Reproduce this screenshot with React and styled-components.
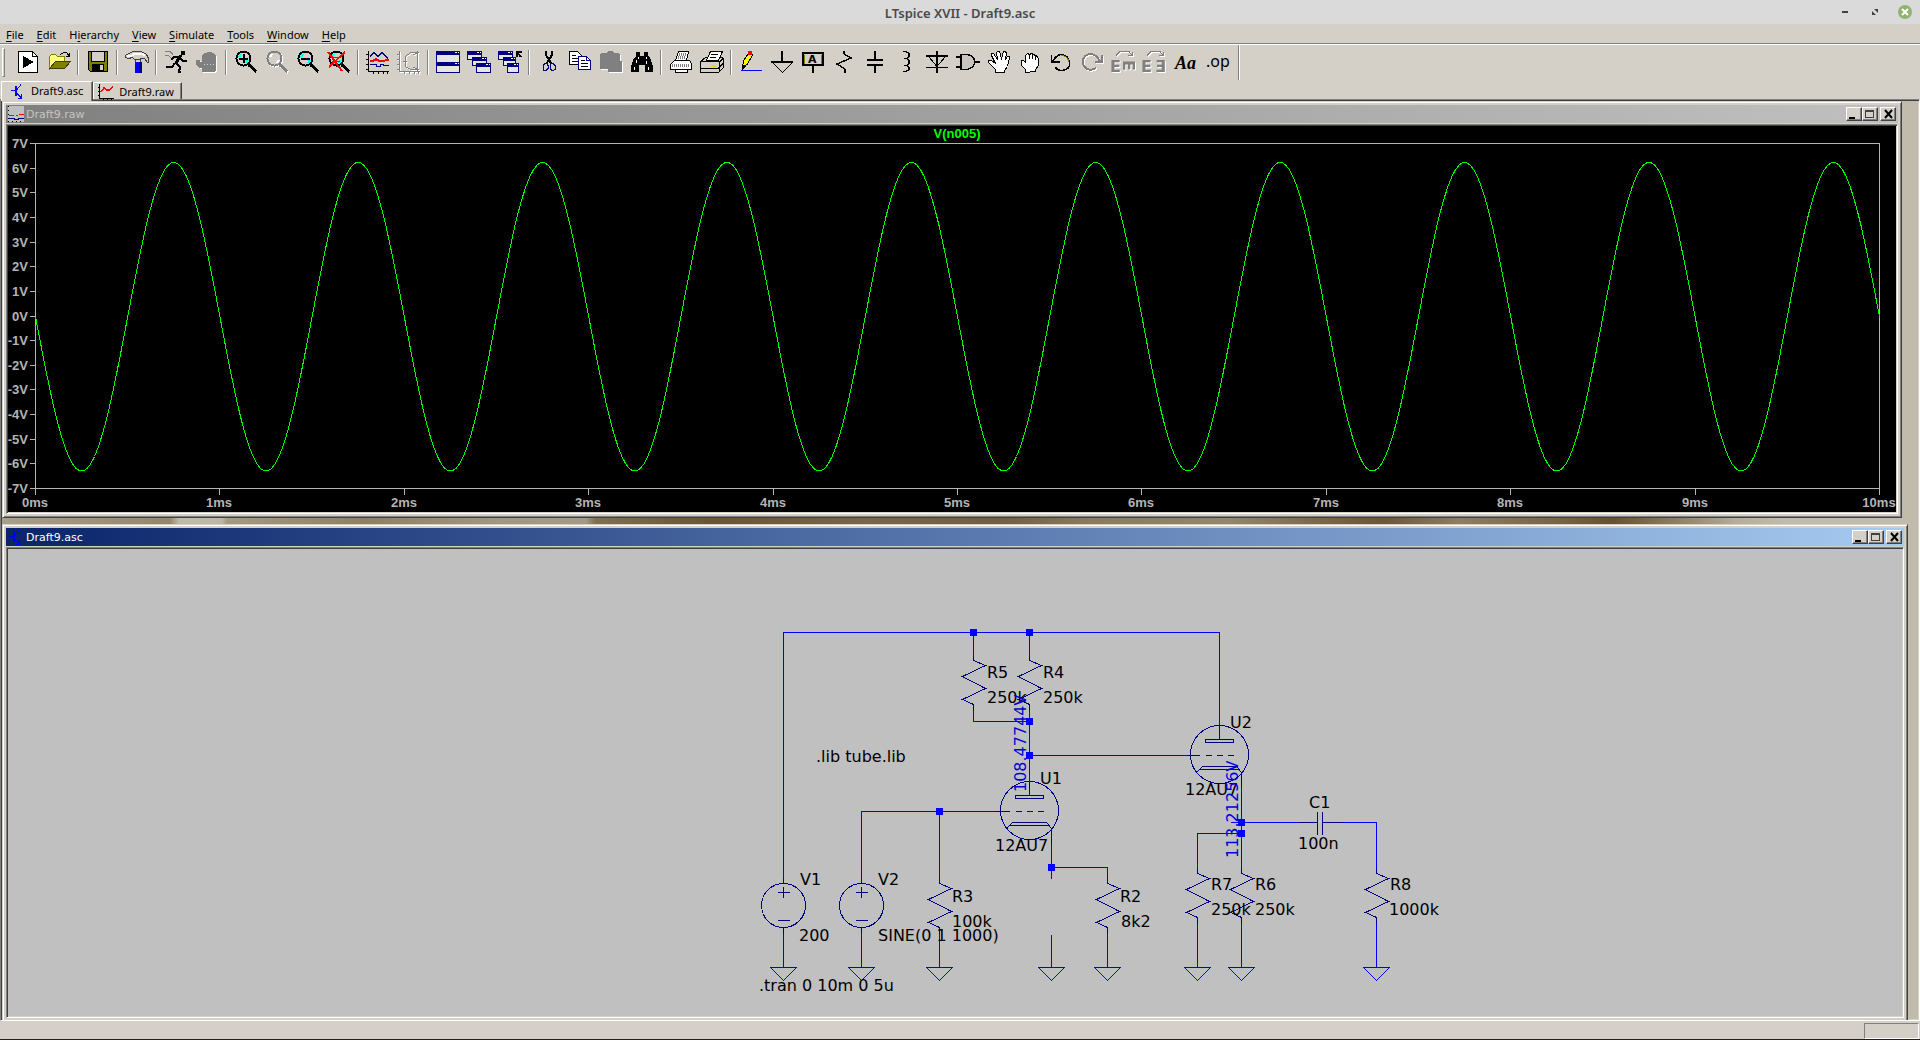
import React, { useState } from "react";
import styled, { createGlobalStyle, css } from "styled-components";

const GlobalStyle = createGlobalStyle`
  * {
    box-sizing: border-box;
  }
  body {
    margin: 0;
    background: #d4d0c8;
    font-family: "Noto Sans", "Open Sans", sans-serif;
    font-size: 11px;
    color: #000;
  }
  button {
    font: inherit;
    color: inherit;
    border: none;
    background: none;
    padding: 0;
  }
`;

const sunken = css`
  border: 1px solid;
  border-color: #808080 #fff #fff #808080;
  box-shadow: inset 1px 1px #404040, inset -1px -1px #d4d0c8;
`;

const Page = styled.div`
  min-height: 100vh;
  display: flex;
  flex-direction: column;
  border-bottom: 1px solid #202020;
`;

const TitleBar = styled.header`
  height: 24px;
  display: grid;
  grid-template-columns: 1fr auto 1fr;
  align-items: center;
  background: #dadada;
  color: #4a4a4a;
`;
const AppTitle = styled.h1`
  grid-column: 2;
  margin: 0;
  padding-top: 2px;
  font-size: 13px;
  font-weight: 600;
  line-height: 16px;
`;
const AppButtons = styled.div`
  display: flex;
  justify-content: flex-end;
  gap: 16px;
  padding-right: 8px;
`;
const AppButton = styled.button`
  width: 14px;
  height: 14px;
  border-radius: 50%;
  background: ${(p) => (p.$close ? "#91b372" : "transparent")};
  svg {
    display: block;
  }
`;

const MenuBar = styled.nav`
  height: 21px;
  display: flex;
  align-items: flex-start;
  border-bottom: 1px solid #fff;
  box-shadow: inset 0 -1px #808080;
`;
const MenuItem = styled.button`
  padding: 3px 7px 0 6px;
  line-height: 16px;
  u {
    text-underline-offset: 2px;
  }
`;

const Toolbar = styled.div`
  height: 36px;
  display: flex;
  align-items: flex-start;
  padding-left: 2px;
`;
const Grip = styled.div`
  width: 3px;
  height: 29px;
  margin: 3px 7px 0 0;
  border: 1px solid;
  border-color: #fff #808080 #808080 #fff;
`;
const Separator = styled.div`
  width: 2px;
  height: 25px;
  margin: 5px 3px 0;
  border-left: 1px solid #808080;
  border-right: 1px solid #fff;
`;
const ToolbarEnd = styled(Separator)`
  height: 35px;
  margin: 0 7px;
`;
const ToolButton = styled.button`
  width: 31px;
  height: 34px;
  display: flex;
  justify-content: center;
  align-items: center;
  svg {
    filter: ${(p) => (p.disabled ? "drop-shadow(1px 1px 0 #fff)" : "none")};
  }
`;

const Tabs = styled.div`
  display: flex;
  align-items: flex-end;
  padding-left: 1px;
  height: 18px;
`;
const Tab = styled.button`
  position: relative;
  z-index: ${(p) => (p.$active ? 1 : 0)};
  display: flex;
  align-items: center;
  height: ${(p) => (p.$active ? 20 : 17)}px;
  margin-bottom: ${(p) => (p.$active ? -2 : 0)}px;
  padding: ${(p) => (p.$active ? "0 9px 2px 8px" : "2px 7px 0 4px")};
  gap: 5px;
  background: #d4d0c8;
  border: 1px solid;
  border-color: #fff #404040 transparent #fff;
  border-bottom-width: 0;
  box-shadow: inset -1px 0 #808080;
  line-height: 16px;
`;

const Mdi = styled.main`
  ${sunken}
  flex: 1;
  overflow: hidden;
  padding: 1px;
  background: linear-gradient(
    to right,
    #a9a08a 0%,
    #948668 8.8%,
    #c0bba9 9.3%,
    #bdb6a3 11.5%,
    #a39b80 11.8%,
    #8f7f60 19%,
    #a09880 26%,
    #a29a82 30.5%,
    #80704f 31%,
    #6a5434 37%,
    #7a6546 45%,
    #735e3f 52%,
    #8b7b5c 57%,
    #94866a 64%,
    #806c4c 68%,
    #6d5535 72%,
    #8e7d60 76%,
    #7a6545 81%,
    #67502f 84%,
    #96886a 88%,
    #b5ad9a 90.5%,
    #c1bbab 93%
  );
`;

const Frame = styled.section`
  padding: 3px;
  background: #d4d0c8;
  border: 1px solid;
  border-color: #d4d0c8 #404040 #404040 #d4d0c8;
  box-shadow: inset 1px 1px #fff, inset -1px -1px #808080;
  margin: ${(p) => (p.$active ? "6px 10px -3px 0" : "0 16px 0 0")};
`;
const Caption = styled.div`
  height: 18px;
  margin-bottom: 1px;
  padding: 0 2px 0 2px;
  display: flex;
  align-items: center;
  background: ${(p) =>
    p.$active
      ? "linear-gradient(to right, #0a246a, #a6caf0)"
      : "linear-gradient(to right, #808080, #c0c0c0)"};
  color: ${(p) => (p.$active ? "#fff" : "#c8c5be")};
`;
const CaptionText = styled.h2`
  flex: 1;
  margin: 0 0 0 2px;
  padding-top: 2px;
  font: 11px/16px "DejaVu Sans", sans-serif;
`;
const CaptionButton = styled.button`
  width: 16px;
  height: 14px;
  background: #d4d0c8;
  border: 1px solid;
  border-color: #fff #404040 #404040 #fff;
  box-shadow: inset -1px -1px #808080;
  &:last-child {
    margin-left: 2px;
  }
  svg {
    display: block;
  }
`;
const Client = styled.div`
  ${sunken}
  padding: 1px;
  background: ${(p) => p.$color};
`;
const Drawing = styled.svg`
  display: block;
  width: 100%;
  height: auto;
  text {
    font: ${(p) => p.$font};
  }
`;

const StatusBar = styled.footer`
  height: 18px;
  display: flex;
  justify-content: flex-end;
  padding: 2px 1px 0 0;
`;
const StatusPane = styled.div`
  width: 55px;
  height: 16px;
  border: 1px solid;
  border-color: #808080 #fff #fff #808080;
`;

const G = "#808080";
const NAVY = "#000080";

const lens = (color, shine) => (
  <>
    <path d="M14.500 14.500l8 7" stroke={color} strokeWidth="3" />
    <circle cx="9.500" cy="8.500" r="7.500" stroke={color} strokeWidth="1" fill="#d4d0c8" />
    <circle cx="9.500" cy="8.500" r="6.500" stroke={color} strokeWidth="1" />
    <path d="M5 7l2-3M14 10l-2 3" stroke={shine} strokeWidth="2" />
  </>
);

const miniWindow = (x, y, w = 14, h = 9) => (
  <>
    <rect x={x + 0.5} y={y + 0.5} width={w} height={h} fill="#e8e6e0" stroke={NAVY} />
    <path d={`M${x} ${y + 2}h${w + 1}`} stroke={NAVY} strokeWidth="4" />
    <path d={`M${x + w - 4} ${y + 1.5}h2m1 0h1`} stroke="#fff" />
  </>
);

const ICONS = {
  run: (
    <>
      <path d="M2.500 1.500h14l5 5v16h-19z" fill="#fff" stroke="#000" />
      <path d="M16.500 1.500v5h5" stroke="#000" />
      <path d="M7 6v12l11-6z" fill="#000" />
    </>
  ),
  open: (
    <>
      <path d="M2.500 19V6.500l2-2h4l2 2h7v5h-9z" fill="#ffff80" stroke="#808000" />
      <path d="M2.500 18.500l6-7h15l-6 7z" fill="#808000" stroke="#404000" />
      <path d="M13.500 4.500l3-2h3l3 4M18.500 6.500h4v-4" stroke="#000" />
    </>
  ),
  save: (
    <>
      <path d="M2.500 1.500h19v20h-17l-2-2z" fill="#808000" stroke="#000" />
      <rect x="5.500" y="1.500" width="13" height="10" fill="#d4d0c8" stroke="#000" />
      <rect x="6" y="14" width="12" height="7" fill="#000" />
      <rect x="14" y="15" width="3" height="5" fill="#d4d0c8" />
    </>
  ),
  hammer: (
    <>
      <rect x="10" y="9" width="5" height="4" fill="#d4d0c8" stroke="#404040" />
      <rect x="10" y="12" width="6" height="11" fill="#00f" />
      <rect x="14" y="12" width="3" height="11" fill={NAVY} />
      <path
        d="M.5 5.500l5-3 3-1h8l5 3 2 4v4h-1l-3-4h-4l-1 1h-5l-2-2-4 1-3-1z"
        fill="#d4d0c8"
        stroke="#404040"
      />
      <path d="M2 5.500h5l3-2h7l3 2" stroke="#fff" strokeWidth="2" />
    </>
  ),
  runner: (
    <>
      <rect x="17" y="1" width="4" height="4" fill="#000" />
      <path d="M17 5l-5 8" stroke="#000" strokeWidth="3" />
      <path d="M16 6.500h-5l-4 3M16 8l3 3h4M12 13l4 4-1 5h2M11 13l-3 4H2" stroke="#000" strokeWidth="2" />
      <path d="M1 1.500h5l3 3M1 5.500h3l3 2" stroke={G} />
    </>
  ),
  halt: (
    <>
      <path d="M7 22v-4H4l-3-3v-5h4v2h2V5l2-2h3V2h5v1h2l2 3v14l-2 2z" fill={G} />
      <path d="M9 14.500h10" stroke="#d4d0c8" strokeDasharray="1 2" />
    </>
  ),
  zoomIn: (
    <>
      {lens("#000", "#00ffff")}
      <path d="M5 8.500h9M9.500 4v9" stroke="#000" strokeWidth="2" />
    </>
  ),
  zoomPan: lens(G, "#fff"),
  zoomOut: (
    <>
      {lens("#000", "#00ffff")}
      <path d="M5 8.500h9" stroke="#000" strokeWidth="2" />
    </>
  ),
  zoomFit: (
    <>
      {lens("#000", "#00ffff")}
      <path d="M1 2l14 19M18 2L2 17" stroke="#f00" strokeWidth="2" />
      <path d="M6 7.500h6M5 11.500h8" stroke="#f00" strokeWidth="1" />
    </>
  ),
  plot: (
    <>
      <path d="M2.500 1v20.500H23M0 4.500h2M0 9.500h2M0 14.500h2M0 19.500h2M7.500 22v2M12.500 22v2M17.500 22v2M21.500 22v2" stroke="#000" />
      <path d="M4 6.500l4-4 4 4 4-4 6 6" stroke={NAVY} />
      <path d="M4 11h3l3-2 3 2h5l2-1h3" stroke="#f00" strokeWidth="2" />
      <path d="M4 14.500h6v2h4v-2h3v1h6" stroke={NAVY} />
    </>
  ),
  autorange: (
    <>
      <path d="M2.500 1v20.500H23M0 4.500h2M0 9.500h2M0 14.500h2M0 19.500h2M7.500 22v2M12.500 22v2M17.500 22v2M21.500 22v2" stroke={G} />
      <path d="M20 2.500h-6l-6 4v10l6 3h6M20.500 1v20M16 5l6-3M16 17l6 3M6 11.500h4" stroke={G} />
    </>
  ),
  tile: (
    <>
      {miniWindow(0, 1, 23, 11)}
      {miniWindow(0, 12, 23, 10)}
    </>
  ),
  cascade: (
    <>
      {miniWindow(0, 1, 14, 8)}
      {miniWindow(5, 7, 14, 8)}
      {miniWindow(9, 13, 14, 9)}
    </>
  ),
  closeAll: (
    <>
      {miniWindow(0, 1, 14, 8)}
      {miniWindow(5, 7, 12, 8)}
      {miniWindow(9, 13, 11, 9)}
      <path d="M18.500 7V1.500h5M19 2l4 5" stroke="#000" strokeWidth="2" />
    </>
  ),
  cut: (
    <>
      <path d="M9 1v4l5 8M15 1v4l-5 8" stroke="#000" strokeWidth="2" />
      <path d="M8 13.500h2l1 2v3l-2 2h-2l-1-1v-4zM14 13.500h2l2 2v4l-2 1h-1l-2-2v-3z" stroke={NAVY} strokeWidth="1" />
    </>
  ),
  copy: (
    <>
      <path d="M1.500 1.500h8l4 4v9h-12z" fill="#fff" stroke="#000" />
      <path d="M4 5.500h4M4 8.500h6M4 11.500h6" stroke="#000" />
      <path d="M10.500 6.500h8l4 4v9h-12z" fill="#fff" stroke={NAVY} />
      <path d="M18.500 6.500v4h4" stroke={NAVY} />
      <path d="M13 10.500h4M13 13.500h7M13 16.500h7" stroke="#000" />
    </>
  ),
  paste: <path d="M1 4l2-1h4l2-2h4l2 2h4l2 2v6h2v11H9v-3H1z" fill={G} />,
  find: (
    <>
      <path
        d="M6 2h4v4h4V2h4v4l2 2 3 8v6h-8v-7h-6v7H1v-6l3-8 2-2z"
        fill="#000"
      />
      <path d="M8 7v2M16 7v2M6 10v3M16 11v3M4.500 17v3M18.500 17v3" stroke="#fff" strokeWidth="1" />
    </>
  ),
  printSetup: (
    <>
      <path d="M6.500 10.500l3-9h10l-2 9zM1.500 19.500v-5l4-4h15l2 3v6z" fill="#fff" stroke="#000" />
      <path d="M10 4.500h7M9 7.500h7M3 15.500h18" stroke={G} strokeDasharray="1 1" strokeWidth="3" />
      <path d="M6.500 19.500h12v3h-12z" fill="#fff" stroke="#000" />
    </>
  ),
  print: (
    <>
      <path d="M.5 11.500l5-4h17l1 1v9l-5 5H.5z" fill="#d4d0c8" stroke="#000" />
      <path d="M6.500 10.500l4-9h12l-4 9z" fill="#fff" stroke="#000" />
      <path d="M11 4.500h7M10 7.500h6M1 11.500h18v10M1 18.500h17l5-5M19 12.500l4-4" stroke="#000" />
      <path d="M11 15.500h5" stroke="#dddd00" strokeWidth="2" />
    </>
  ),
  pencil: (
    <>
      <path d="M3.500 18l1-7 5-8 4 2-5 9z" fill="#ffff00" stroke="#000" />
      <path d="M9 1h4v4h-4z" fill="#f00" />
      <path d="M3 14v6l4-4z" fill="#000" />
      <path d="M2 20.500h21" stroke="#00f" />
    </>
  ),
  ground: (
    <>
      <path d="M12 1v11M1 12h22" stroke="#000" strokeWidth="2" />
      <path d="M2.500 12.500l10 10 10-10" stroke="#000" />
    </>
  ),
  label: (
    <>
      <path d="M2 3h20v12H2z" stroke="#000" strokeWidth="2" />
      <path d="M3.500 5v9M20.500 5v9" stroke="#808000" />
      <path d="M12 16v7" stroke="#000" strokeWidth="2" />
      <text x="7" y="13" fontSize="11" fontWeight="bold" fontFamily="DejaVu Sans" fill="#000">A</text>
    </>
  ),
  resistor: (
    <>
      <path d="M11.500 1v3M12.500 19v4" stroke="#000" strokeWidth="2" />
      <path d="M12 4l7 4-14 6 8 5" stroke="#000" strokeWidth="1.5" />
    </>
  ),
  capacitor: <path d="M12 1v8M4 10h16M4 15h16M12 15v8" stroke="#000" strokeWidth="2" />,
  inductor: <path d="M9 1.500h3l3 2v3l-2 2h-3 3l2 2v3l-2 2h-3 3l2 2v2l-3 2h-3" stroke="#000" strokeWidth="1.5" />,
  diode: (
    <>
      <path d="M12 1v22M1 6h22M1 17.500h22" stroke="#000" strokeWidth="1.500" />
      <path d="M3.500 6.500l8.500 10 8.500-10" stroke="#000" />
    </>
  ),
  gate: (
    <>
      <path d="M0 7h5M0 17h5M18 12h6" stroke="#000" strokeWidth="2" />
      <path d="M5 4.500h6q7 1 8 7.500-1 6-8 7.500H5z" stroke="#000" strokeWidth="1.500" fill="#c8c5be" />
    </>
  ),
  move: (
    <path
      d="M8.500 22.500v-3l-7-7v-2h3l4 3-4-8v-2h2l4 6-1-7 1-1h2l2 7 2-7h2l1 2-1 6 2-3h2v2l-2 8-3 4v2z"
      fill="#fff"
      stroke="#000"
    />
  ),
  drag: (
    <path
      d="M7.500 22.500v-3l-4-4v-5h2l2 2v-7l2-2 2 1 2-1 2 1 2 1 2 1 1 3v6l-3 4v2zM11.500 5v4M14.500 5v4M17.500 6v4"
      fill="#fff"
      stroke="#000"
    />
  ),
  undo: (
    <>
      <path d="M3.500 11.500q4-7 9-7 7 1 8 8t-8 8q-4 0-6-3" stroke="#000" strokeWidth="1.500" />
      <path d="M12 5.500q6 0 8 6" stroke="#808000" />
      <path d="M2.500 5v7h8" stroke="#000" strokeWidth="1.500" />
    </>
  ),
  redo: (
    <>
      <path d="M20 11q-4-7-10-7-7 1-7 8t8 8l5-2" stroke={G} strokeWidth="2" />
      <path d="M21.500 5v7h-7" stroke={G} strokeWidth="2" />
    </>
  ),
  rotate: (
    <>
      <path d="M5 5.500l4-4h9l3 4M17 5.500h4v-4" stroke={G} />
      <text x="-1" y="22" fontSize="16" fontWeight="bold" fontFamily="DejaVu Sans" fill={G}>E</text>
      <text fontSize="16" fontWeight="bold" fontFamily="DejaVu Sans" fill={G} transform="translate(12 10) rotate(90)">E</text>
    </>
  ),
  mirror: (
    <>
      <path d="M5 5.500l4-4h9l3 4M17 5.500h4v-4" stroke={G} />
      <text x="-1" y="22" fontSize="16" fontWeight="bold" fontFamily="DejaVu Sans" fill={G}>E</text>
      <text x="13" y="22" fontSize="16" fontWeight="bold" fontFamily="DejaVu Sans" fill={G}>Ǝ</text>
    </>
  ),
  text: (
    <text x="2" y="19" fontSize="18" fontWeight="bold" fontStyle="italic" fontFamily="Liberation Serif" fill="#000">Aa</text>
  ),
  op: (
    <text x="2" y="17" fontSize="16" fontFamily="Noto Sans" fill="#000">.op</text>
  ),
  transistor: (
    <path d="M6.500 3v10M5.500 3v10M1 7.500h5M7 6.500l4-5M7 10.500l4 4M11.500 11v4H8" stroke="#00f" />
  ),
};

const TOOLS = [
  ["run", "Run"], ["open", "Open"], null,
  ["save", "Save"], null,
  ["hammer", "Control Panel"], null,
  ["runner", "Run simulation"], ["halt", "Halt", true], null,
  ["zoomIn", "Zoom in"], ["zoomPan", "Pan", true], ["zoomOut", "Zoom back"], ["zoomFit", "Zoom full extents"], null,
  ["plot", "Plot"], ["autorange", "Autorange", true], null,
  ["tile", "Tile windows"], ["cascade", "Cascade windows"], ["closeAll", "Close all"], null,
  ["cut", "Cut"], ["copy", "Copy"], ["paste", "Paste", true], ["find", "Find"], null,
  ["printSetup", "Print setup"], ["print", "Print"], null,
  ["pencil", "Wire"], ["ground", "Ground"], ["label", "Label net"], ["resistor", "Resistor"],
  ["capacitor", "Capacitor"], ["inductor", "Inductor"], ["diode", "Diode"], ["gate", "Component"],
  ["move", "Move"], ["drag", "Drag"], ["undo", "Undo"], ["redo", "Redo", true],
  ["rotate", "Rotate", true], ["mirror", "Mirror", true], ["text", "Text"], ["op", "SPICE directive"],
];

const MENUS = [
  ["", "F", "ile"], ["", "E", "dit"], ["H", "i", "erarchy"], ["", "V", "iew"],
  ["", "S", "imulate"], ["", "T", "ools"], ["", "W", "indow"], ["", "H", "elp"],
];

const Icon = ({ name, size = 24 }) => (
  <svg
    width={size}
    height={size}
    viewBox={`0 0 ${size} ${size}`}
    overflow="visible"
    fill="none"
    shapeRendering="crispEdges"
    aria-hidden="true"
  >
    {ICONS[name]}
  </svg>
);

const RawIcon = ({ bg = "none" }) => (
  <svg width="16" height="16" viewBox="0 0 16 16" fill="none" shapeRendering="crispEdges" aria-hidden="true">
    <rect width="16" height="16" fill={bg} />
    <path d="M1.500 0v14.500H16M0 3.500h1M0 7.500h1M0 11.500h1M5.500 15v1M9.500 15v1M13.500 15v1" stroke="#000" />
    <path d="M3 8l3-4 3 2h2l4-3" stroke="#f00" strokeWidth="1.500" />
  </svg>
);

const PlotIcon = () => (
  <svg width="16" height="16" viewBox="0 0 16 16" fill="none" shapeRendering="crispEdges" aria-hidden="true">
    <rect width="16" height="16" fill="#c0c0c0" />
    <path d="M1 9.500h5M8 9.500h2M11 8.500h5" stroke="#f00" />
    <path d="M1 12.500h5v1h4v-1h6" stroke={NAVY} />
    <path d="M.5 0v16M0 15.500h16" stroke="#000" strokeDasharray="1 3" />
  </svg>
);

const WindowButtons = () => (
  <>
    <CaptionButton aria-label="Minimize">
      <svg width="14" height="12" shapeRendering="crispEdges"><path d="M2 9h6v2H2z" /></svg>
    </CaptionButton>
    <CaptionButton aria-label="Maximize">
      <svg width="14" height="12" fill="none" stroke="#404040" shapeRendering="crispEdges">
        <path d="M2.500 2.500h8v7h-8zM2 3.500h9" />
      </svg>
    </CaptionButton>
    <CaptionButton aria-label="Close">
      <svg width="14" height="12" stroke="#000" strokeWidth="2"><path d="M4 2l7 8M11 2l-7 8" /></svg>
    </CaptionButton>
  </>
);

// plot area, in the coordinates of the drawing
const X0 = 35;
const X1 = 1879;
const Y0 = 143;
const Y1 = 488;
const xOf = (ms) => X0 + ((X1 - X0) * ms) / 10;
const yOf = (v) => Y0 + ((Y1 - Y0) * (7 - v)) / 14;

const wave = Array.from({ length: 501 }, (_, i) => {
  const t = i / 50;
  return `${xOf(t).toFixed(1)},${yOf(-0.03 - 6.27 * Math.sin(2 * Math.PI * t)).toFixed(1)}`;
}).join(" ");

const Plot = () => (
  <Drawing
    viewBox="8 126 1888 386"
    $font='bold 13px "Liberation Sans", sans-serif'
    role="img"
    aria-label="V(n005)"
  >
    <g transform="translate(.5 .5)" stroke="#b4b4b4" fill="none" shapeRendering="crispEdges">
      <rect x={X0} y={Y0} width={X1 - X0} height={Y1 - Y0} />
      {Array.from({ length: 15 }, (_, i) => (
        <path key={i} d={`M${X0 - 6} ${Math.round(yOf(7 - i))}h6`} />
      ))}
      {Array.from({ length: 11 }, (_, i) => (
        <path key={i} d={`M${Math.round(xOf(i))} ${Y1}v6`} />
      ))}
      <polyline points={wave} stroke="#00ff00" />
    </g>
    <g fill="#b4b4b4">
      {Array.from({ length: 15 }, (_, i) => (
        <text key={i} x={X0 - 7} y={Math.round(yOf(7 - i)) + 5} textAnchor="end">{7 - i}V</text>
      ))}
      {Array.from({ length: 11 }, (_, i) => (
        <text key={i} x={Math.round(xOf(i))} y="507" textAnchor="middle">{i}ms</text>
      ))}
    </g>
    <text x="957" y="138" textAnchor="middle" fill="#00ff00">V(n005)</text>
  </Drawing>
);

const WIRES = [
  "M783 878V632H1219V724",
  "M973 632V655M1029 632V655",
  "M973 710V721H1029M1029 710V780",
  "M1029 755H1186",
  "M861 878V811H996M939 811V878",
  "M1051 843V878M1051 867H1107V878M1051 934V967",
  "M1241 787V868M1230 822H1298M1342 822H1376V868",
  "M1241 833H1197V868",
  "M783 933V967M861 933V967M939 933V967M1107 933V967",
  "M1197 923V967M1241 923V967M1376 923V967",
];
const JUNCTIONS = [
  [973, 632], [1029, 632], [1029, 721], [1029, 755],
  [939, 811], [1051, 867], [1241, 822], [1241, 833],
];
const GROUNDS = [783, 861, 939, 1051, 1107, 1197, 1241, 1376];
const RESISTORS = [
  [973, 660], [1029, 660], [939, 883], [1107, 883], [1197, 873], [1241, 873], [1376, 873],
];
const LABELS = [
  [987, 678, "R5"], [987, 703, "250k"], [1043, 678, "R4"], [1043, 703, "250k"],
  [816, 762, ".lib tube.lib"], [1040, 784, "U1"], [995, 851, "12AU7"],
  [800, 885, "V1"], [799, 941, "200"], [878, 885, "V2"], [878, 941, "SINE(0 1 1000)"],
  [952, 902, "R3"], [952, 927, "100k"], [759, 991, ".tran 0 10m 0 5u"],
  [1120, 902, "R2"], [1121, 927, "8k2"], [1230, 728, "U2"], [1185, 795, "12AU7"],
  [1309, 808, "C1"], [1298, 849, "100n"], [1211, 890, "R7"], [1211, 915, "250k"],
  [1255, 890, "R6"], [1255, 915, "250k"], [1390, 890, "R8"], [1389, 915, "1000k"],
];

const Resistor = ({ x, y }) => (
  <path d={`M${x} ${y - 5}v5l12 5-23 11 23 12-23 11 11 5v6`} />
);
const Source = ({ x, y }) => (
  <path
    d={`M${x - 22} ${y}a22 22 0 1 0 44 0a22 22 0 1 0-44 0M${x} ${y - 27}v5M${x} ${y + 22}v6M${x - 6} ${y - 13}h12M${x} ${y - 19}v11M${x - 6} ${y + 15}h12`}
  />
);
const Tube = ({ x, y }) => (
  <path
    d={`M${x - 29} ${y - 1}a29 29 0 1 0 58 0a29 29 0 1 0-58 0M${x} ${y - 31}v15M${x - 14} ${y - 16}h28v3h-28zM${x - 33} ${y}h13M${x - 14} ${y}h6M${x - 3} ${y}h6M${x + 8} ${y}h6M${x - 23} ${y + 17}l6-6h34l5 6v15M${x - 20} ${y + 14}h40`}
  />
);

const Schematic = () => (
  <Drawing
    viewBox="8 549 1894 467"
    $font='16px "DejaVu Sans", sans-serif'
    role="img"
    aria-label="Tube amplifier schematic"
  >
    <g transform="translate(.5 .5)" fill="none" shapeRendering="crispEdges">
      <g stroke="#0000ff">
        {WIRES.map((d) => (
          <path key={d} d={d} />
        ))}
        {GROUNDS.map((x) => (
          <path key={x} d={`M${x - 13} 967h26l-13 13z`} />
        ))}
      </g>
      <g stroke={NAVY}>
        {RESISTORS.map(([x, y]) => (
          <Resistor key={`${x}-${y}`} x={x} y={y} />
        ))}
        <Source x={783} y={905} />
        <Source x={861} y={905} />
        <Tube x={1029} y={811} />
        <Tube x={1219} y={755} />
        <path d="M1298 822H1317M1317 811v23M1322 811v23M1322 822H1342" />
      </g>
    </g>
    {LABELS.map(([x, y, label]) => (
      <text key={`${x}-${y}`} x={x} y={y}>{label}</text>
    ))}
    <g fill="#0000d8">
      <text transform="translate(1026 792) rotate(-90)">108.47744V</text>
      <text transform="translate(1238 858) rotate(-90)">113.21256V</text>
    </g>
    <g fill="#0000ff" shapeRendering="crispEdges">
      {JUNCTIONS.map(([x, y]) => (
        <rect key={`${x}-${y}`} x={x - 3} y={y - 3} width="7" height="7" />
      ))}
    </g>
  </Drawing>
);

const App = () => {
  const [tab, setTab] = useState("asc");

  return (
    <Page>
      <GlobalStyle />
      <TitleBar>
        <AppTitle>LTspice XVII - Draft9.asc</AppTitle>
        <AppButtons>
          <AppButton aria-label="Minimize">
            <svg width="14" height="14"><path d="M4 6h6v2H4z" fill="#404040" /></svg>
          </AppButton>
          <AppButton aria-label="Restore">
            <svg width="14" height="14"><path d="M6 4h4v4zM4 6v4h4z" fill="#404040" /></svg>
          </AppButton>
          <AppButton $close aria-label="Close">
            <svg width="14" height="14"><path d="M4 4l6 6M10 4l-6 6" stroke="#fff" strokeWidth="2" /></svg>
          </AppButton>
        </AppButtons>
      </TitleBar>
      <MenuBar>
        {MENUS.map(([pre, key, rest]) => (
          <MenuItem key={pre + key + rest}>{pre}<u>{key}</u>{rest}</MenuItem>
        ))}
      </MenuBar>
      <Toolbar>
        <Grip />
        {TOOLS.map((tool, i) =>
          tool ? (
            <ToolButton key={i} aria-label={tool[1]} disabled={tool[2]}>
              <Icon name={tool[0]} />
            </ToolButton>
          ) : (
            <Separator key={i} />
          )
        )}
        <ToolbarEnd />
      </Toolbar>
      <Tabs>
        <Tab $active={tab === "asc"} onClick={() => setTab("asc")}>
          <Icon name="transistor" size={16} />
          Draft9.asc
        </Tab>
        <Tab $active={tab === "raw"} onClick={() => setTab("raw")}>
          <RawIcon />
          Draft9.raw
        </Tab>
      </Tabs>
      <Mdi>
        <Frame>
          <Caption>
            <PlotIcon />
            <CaptionText>Draft9.raw</CaptionText>
            <WindowButtons />
          </Caption>
          <Client $color="#000">
            <Plot />
          </Client>
        </Frame>
        <Frame $active>
          <Caption $active>
            <Icon name="transistor" size={16} />
            <CaptionText>Draft9.asc</CaptionText>
            <WindowButtons />
          </Caption>
          <Client $color="#c0c0c0">
            <Schematic />
          </Client>
        </Frame>
      </Mdi>
      <StatusBar>
        <StatusPane />
      </StatusBar>
    </Page>
  );
};

export default App;
